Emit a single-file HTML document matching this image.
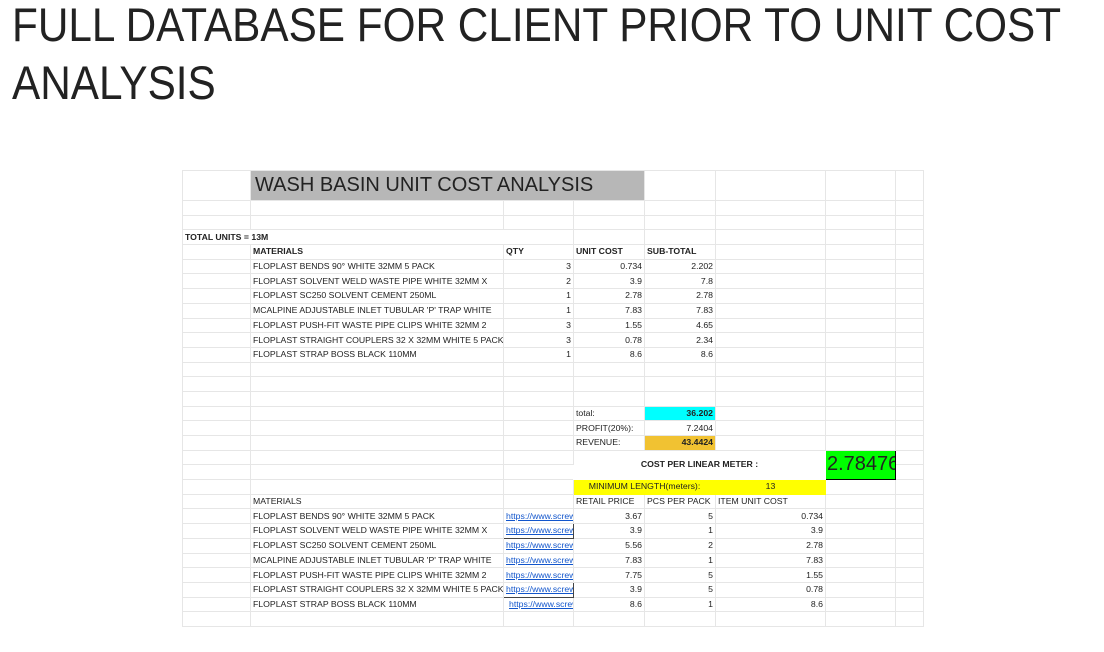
<!DOCTYPE html>
<html><head><meta charset="utf-8"><style>
body{margin:0;width:1104px;height:652px;background:#fff;overflow:hidden;position:relative;font-family:"Liberation Sans",Arial,sans-serif}
.h{position:absolute;left:12px;font-size:47px;line-height:58px;color:#222;white-space:nowrap;transform-origin:0 0;transform:scaleX(.9);font-weight:normal}
table{position:absolute;left:182px;top:170px;width:741px;border-collapse:collapse;table-layout:fixed;font-size:8.7px;color:#222}
tr{height:14.7px}
td{border:1px solid #e6e6e6;padding:0 2px;white-space:nowrap;overflow:hidden;line-height:13px;box-sizing:border-box}
tr.t{height:30px}
.r{text-align:right}.b{font-weight:bold}.c{text-align:center}
a{color:#1155cc;text-decoration:underline}
</style></head><body>
<div class="h" style="top:-4px">FULL DATABASE FOR CLIENT PRIOR TO UNIT COST</div>
<div class="h" style="top:54px">ANALYSIS</div>
<table>
<colgroup><col style="width:68px"><col style="width:253px"><col style="width:70px"><col style="width:71px"><col style="width:71px"><col style="width:110px"><col style="width:70px"><col style="width:28px"></colgroup>
<tr class="t"><td></td><td colspan="3" style="background:#b7b7b7;font-size:20px;color:#222;padding-left:4px;line-height:29px">WASH BASIN UNIT COST ANALYSIS</td><td></td><td></td><td></td><td></td></tr>
<tr><td></td><td></td><td></td><td></td><td></td><td></td><td></td><td></td></tr>
<tr><td></td><td></td><td></td><td></td><td></td><td></td><td></td><td></td></tr>
<tr><td colspan="2" class="b" style="border-right-color:transparent">TOTAL UNITS = 13M</td><td></td><td></td><td></td><td></td><td></td><td></td></tr>
<tr><td></td><td class="b">MATERIALS</td><td class="b">QTY</td><td class="b">UNIT COST</td><td class="b">SUB-TOTAL</td><td></td><td></td><td></td></tr>
<tr><td></td><td>FLOPLAST BENDS 90° WHITE 32MM 5 PACK</td><td class="r">3</td><td class="r">0.734</td><td class="r">2.202</td><td></td><td></td><td></td></tr>
<tr><td></td><td>FLOPLAST SOLVENT WELD WASTE PIPE WHITE 32MM X</td><td class="r">2</td><td class="r">3.9</td><td class="r">7.8</td><td></td><td></td><td></td></tr>
<tr><td></td><td>FLOPLAST SC250 SOLVENT CEMENT 250ML</td><td class="r">1</td><td class="r">2.78</td><td class="r">2.78</td><td></td><td></td><td></td></tr>
<tr><td></td><td>MCALPINE ADJUSTABLE INLET TUBULAR 'P' TRAP WHITE</td><td class="r">1</td><td class="r">7.83</td><td class="r">7.83</td><td></td><td></td><td></td></tr>
<tr><td></td><td>FLOPLAST PUSH-FIT WASTE PIPE CLIPS WHITE 32MM 2</td><td class="r">3</td><td class="r">1.55</td><td class="r">4.65</td><td></td><td></td><td></td></tr>
<tr><td></td><td>FLOPLAST STRAIGHT COUPLERS 32 X 32MM WHITE 5 PACK</td><td class="r">3</td><td class="r">0.78</td><td class="r">2.34</td><td></td><td></td><td></td></tr>
<tr><td></td><td>FLOPLAST STRAP BOSS BLACK 110MM</td><td class="r">1</td><td class="r">8.6</td><td class="r">8.6</td><td></td><td></td><td></td></tr>
<tr><td></td><td></td><td></td><td></td><td></td><td></td><td></td><td></td></tr>
<tr><td></td><td></td><td></td><td></td><td></td><td></td><td></td><td></td></tr>
<tr><td></td><td></td><td></td><td></td><td></td><td></td><td></td><td></td></tr>
<tr><td></td><td></td><td></td><td>total:</td><td class="r b" style="background:#00ffff">36.202</td><td></td><td></td><td></td></tr>
<tr><td></td><td></td><td></td><td>PROFIT(20%):</td><td class="r">7.2404</td><td></td><td></td><td></td></tr>
<tr><td></td><td></td><td></td><td>REVENUE:</td><td class="r b" style="background:#f1c232">43.4424</td><td></td><td></td><td></td></tr>
<tr><td></td><td></td><td></td><td colspan="3" rowspan="2" class="c b" style="border-color:#fff">COST PER LINEAR METER :</td><td rowspan="2" style="background:#00ff00;border:1px solid #000;font-size:20px;padding:0 1px;overflow:hidden">2.78476</td><td></td></tr>
<tr><td></td><td></td><td></td><td></td></tr>
<tr><td></td><td></td><td></td><td colspan="2" class="c" style="background:#ffff00;border-color:#ffff00">MINIMUM LENGTH(meters):</td><td class="c" style="background:#ffff00;border-color:#ffff00">13</td><td></td><td></td></tr>
<tr><td></td><td>MATERIALS</td><td></td><td>RETAIL PRICE</td><td>PCS PER PACK</td><td>ITEM UNIT COST</td><td></td><td></td></tr>
<tr><td></td><td>FLOPLAST BENDS 90° WHITE 32MM 5 PACK</td><td class="r"><a>https://www.screwfix</a></td><td class="r">3.67</td><td class="r">5</td><td class="r">0.734</td><td></td><td></td></tr>
<tr><td></td><td>FLOPLAST SOLVENT WELD WASTE PIPE WHITE 32MM X</td><td style="border:1px solid #444"><a>https://www.screwfix</a></td><td class="r">3.9</td><td class="r">1</td><td class="r">3.9</td><td></td><td></td></tr>
<tr><td></td><td>FLOPLAST SC250 SOLVENT CEMENT 250ML</td><td><a>https://www.screwfix</a></td><td class="r">5.56</td><td class="r">2</td><td class="r">2.78</td><td></td><td></td></tr>
<tr><td></td><td>MCALPINE ADJUSTABLE INLET TUBULAR 'P' TRAP WHITE</td><td><a>https://www.screwfix</a></td><td class="r">7.83</td><td class="r">1</td><td class="r">7.83</td><td></td><td></td></tr>
<tr><td></td><td>FLOPLAST PUSH-FIT WASTE PIPE CLIPS WHITE 32MM 2</td><td><a>https://www.screwfix</a></td><td class="r">7.75</td><td class="r">5</td><td class="r">1.55</td><td></td><td></td></tr>
<tr><td></td><td>FLOPLAST STRAIGHT COUPLERS 32 X 32MM WHITE 5 PACK</td><td style="border:1px solid #444"><a>https://www.screwfix</a></td><td class="r">3.9</td><td class="r">5</td><td class="r">0.78</td><td></td><td></td></tr>
<tr><td></td><td>FLOPLAST STRAP BOSS BLACK 110MM</td><td style="padding-left:5px"><a>https://www.screwfix</a></td><td class="r">8.6</td><td class="r">1</td><td class="r">8.6</td><td></td><td></td></tr>
<tr><td></td><td></td><td></td><td></td><td></td><td></td><td></td><td></td></tr>
</table>
</body></html>
